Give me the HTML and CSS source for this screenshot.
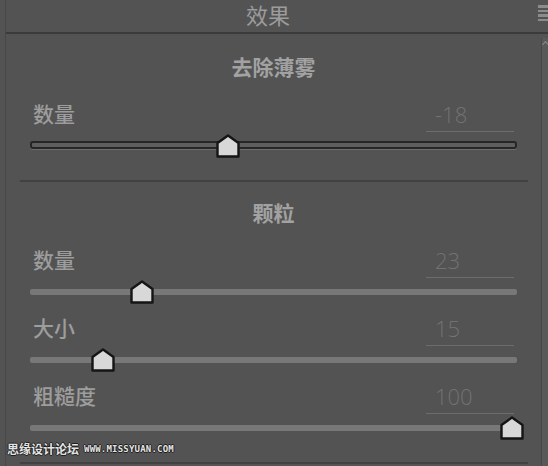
FILE: index.html
```html
<!DOCTYPE html>
<html lang="zh-CN">
<head>
<meta charset="UTF-8">
<meta name="viewport" content="width=device-width, initial-scale=1.0">
<title>效果</title>
<link rel="stylesheet" href="styles.css">
</head>
<body>
  <div class="panel">
    <div class="panel-header">
      <span class="panel-title">效果</span>
      <span class="panel-menu"><i></i><i></i><i></i><i></i></span>
    </div>
    <div class="panel-body">
      <div class="panel-content">
        <section class="group">
          <h2 class="group-title">去除薄雾</h2>
          <div class="row">
            <div class="row-head">
              <span class="row-label">数量</span>
              <span class="row-value">-18</span>
            </div>
            <div class="slider inset">
              <div class="track"></div>
              <svg class="thumb" style="left:40.6%" viewBox="0 0 24 24"><polygon points="1.5,9 12,1.5 22.5,9 22.5,22.5 1.5,22.5"/></svg>
            </div>
          </div>
        </section>
        <hr class="divider">
        <section class="group">
          <h2 class="group-title">颗粒</h2>
          <div class="row">
            <div class="row-head">
              <span class="row-label">数量</span>
              <span class="row-value">23</span>
            </div>
            <div class="slider">
              <div class="track"></div>
              <svg class="thumb" style="left:23%" viewBox="0 0 24 24"><polygon points="1.5,9 12,1.5 22.5,9 22.5,22.5 1.5,22.5"/></svg>
            </div>
          </div>
          <div class="row">
            <div class="row-head">
              <span class="row-label">大小</span>
              <span class="row-value">15</span>
            </div>
            <div class="slider">
              <div class="track"></div>
              <svg class="thumb" style="left:15%" viewBox="0 0 24 24"><polygon points="1.5,9 12,1.5 22.5,9 22.5,22.5 1.5,22.5"/></svg>
            </div>
          </div>
          <div class="row">
            <div class="row-head">
              <span class="row-label">粗糙度</span>
              <span class="row-value">100</span>
            </div>
            <div class="slider">
              <div class="track"></div>
              <svg class="thumb" style="left:99%" viewBox="0 0 24 24"><polygon points="1.5,9 12,1.5 22.5,9 22.5,22.5 1.5,22.5"/></svg>
            </div>
          </div>
        </section>
        <hr class="divider">
      </div>
      <div class="scrollbar"><span class="scroll-arrow"></span></div>
    </div>
    <div class="watermark"><span class="wm-cn">思缘设计论坛</span><span class="wm-url">WWW.MISSYUAN.COM</span></div>
  </div>
</body>
</html>
```

FILE: styles.css
```css
body {
  margin: 0;
  padding: 0;
  background-color: #535353;
  font-family: "Noto Sans CJK SC", "Noto Sans", sans-serif;
  overflow: hidden;
}
.panel {
  position: relative;
  width: 542px;
  height: 466px;
  margin-left: 5px;
  border-left: 1px solid #474747;
}
.panel-header {
  display: flex;
  align-items: flex-start;
  height: 32px;
  border-bottom: 2px solid #3b3b3b;
}
.panel-title {
  flex: 1;
  text-align: center;
  padding-right: 8px;
  padding-top: 1px;
  font-size: 22px;
  line-height: 26px;
  color: #9c9c9c;
}
.panel-menu {
  display: flex;
  flex-direction: column;
  gap: 2px;
  width: 10px;
  padding-top: 5px;
}
.panel-menu i {
  display: block;
  height: 2.5px;
  background-color: #8c8c8c;
}
.panel-body {
  display: flex;
}
.panel-content {
  flex: 1;
  padding-top: 17px;
}
.scrollbar {
  width: 6px;
  margin-top: 4px;
  height: 428px;
  background-color: #595959;
  border-left: 1px solid #474747;
}
.scroll-arrow {
  display: block;
  width: 4px;
  height: 4px;
  margin: 4px 0 0 1px;
  border-top: 1px solid #8a8a8a;
  border-right: 1px solid #8a8a8a;
  transform: rotate(-45deg);
}
.group-title {
  margin: 0 0 17px;
  text-align: center;
  font-size: 21px;
  font-weight: 700;
  line-height: 30px;
  color: #a2a2a2;
}
.row {
  padding: 0 24px;
  margin-bottom: 8px;
}
.row-head {
  display: flex;
  justify-content: space-between;
  align-items: flex-end;
  height: 34px;
}
.row-label {
  padding-left: 3px;
  padding-bottom: 4px;
  font-size: 21px;
  font-weight: 500;
  line-height: 30px;
  color: #9d9d9d;
}
.row-value {
  width: 79px;
  height: 33px;
  margin-right: 3px;
  padding-left: 9px;
  border-bottom: 1px solid #6c6c6c;
  font-family: "Open Sans", "Liberation Sans", sans-serif;
  font-weight: 300;
  font-size: 22px;
  line-height: 32px;
  color: #727272;
}
.slider {
  position: relative;
  display: flex;
  align-items: center;
  height: 24px;
  margin-top: 2px;
}
.track {
  flex: 1;
  height: 6px;
  border-radius: 2px;
  background-color: #787878;
}
.slider.inset .track {
  height: 4px;
  margin-bottom: 2px;
  border: 2px solid #262626;
  border-radius: 3px;
  background-color: #5e5e5e;
  box-shadow: 0 1px 0 #6e6e6e;
}
.thumb {
  position: absolute;
  top: 0;
  width: 24px;
  height: 24px;
  transform: translateX(-50%);
}
.thumb polygon {
  fill: #d8d8d8;
  stroke: #151515;
  stroke-width: 2.4;
  stroke-linejoin: round;
}
.divider {
  margin: 22px 13px 15px 14px;
  border: 0;
  height: 2px;
  background-color: #414141;
}
.watermark {
  position: absolute;
  left: 1px;
  top: 441px;
  display: flex;
  align-items: center;
  gap: 5px;
}
.wm-cn {
  font-size: 12px;
  font-weight: 700;
  line-height: 15px;
  color: #e4e4e4;
  text-shadow: 1px 0 #1e1e1e, -1px 0 #1e1e1e, 0 1px #1e1e1e, 0 -1px #1e1e1e;
}
.wm-url {
  font-family: "DejaVu Sans Mono", monospace;
  font-size: 9px;
  font-weight: 700;
  letter-spacing: 0.2px;
  color: #e4e4e4;
  text-shadow: 1px 0 #1e1e1e, -1px 0 #1e1e1e, 0 1px #1e1e1e, 0 -1px #1e1e1e;
}
```
